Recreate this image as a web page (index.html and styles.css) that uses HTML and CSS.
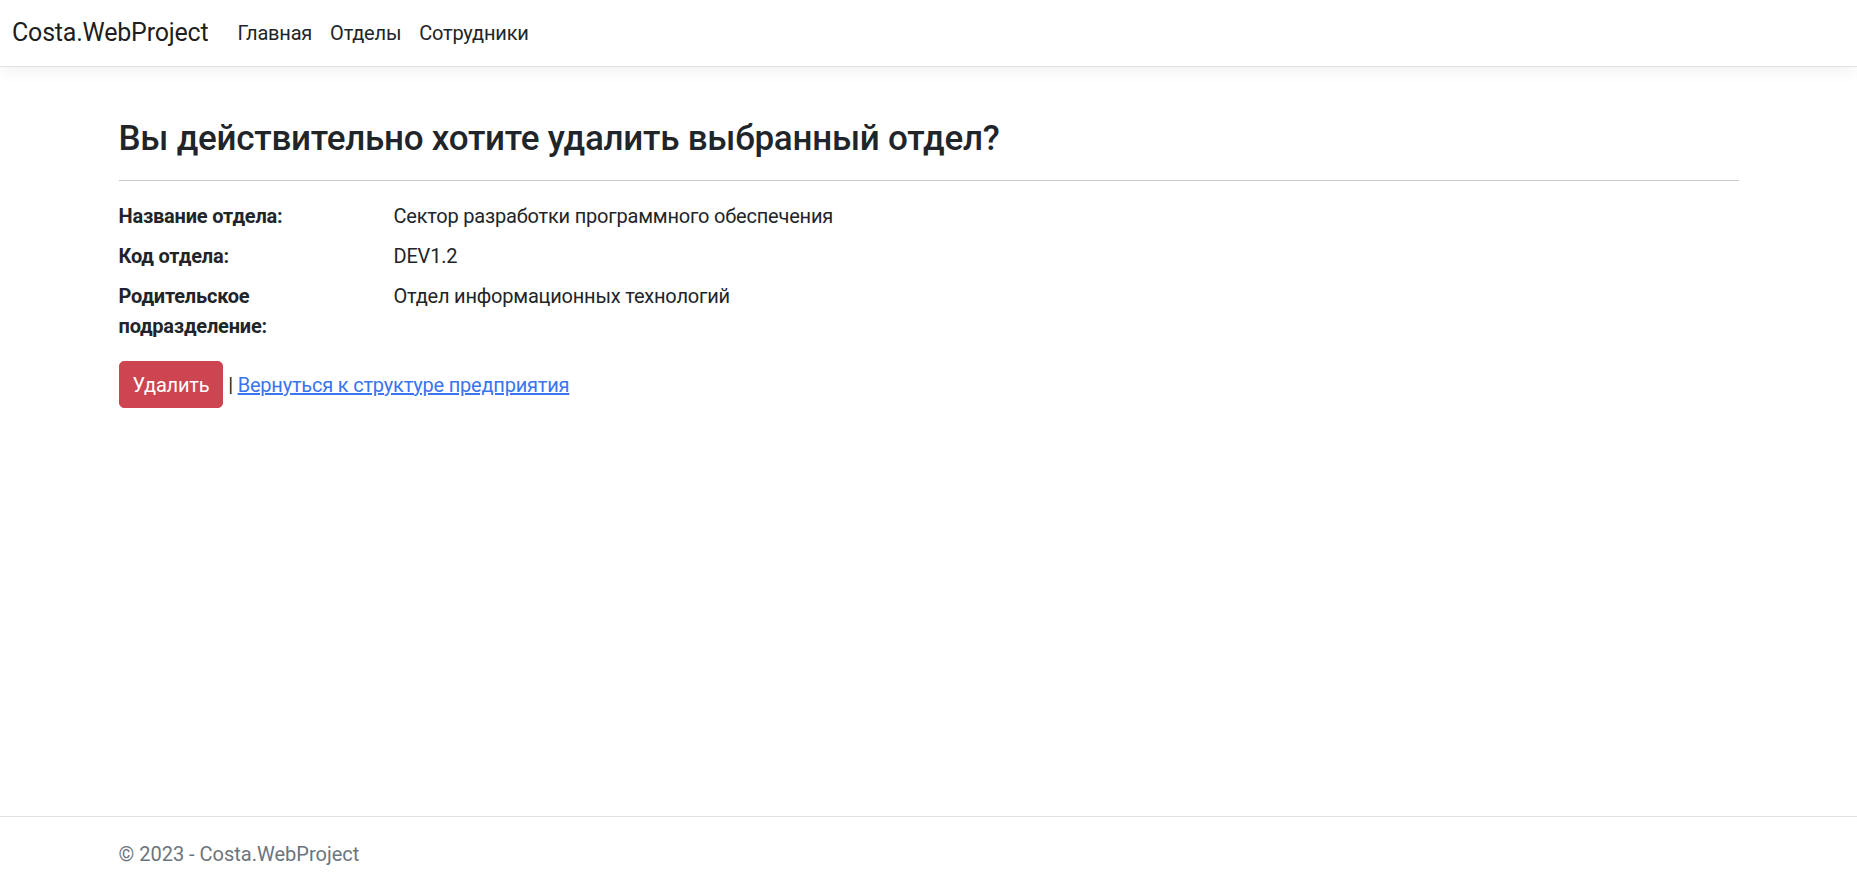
FILE: index.html
```html
<!DOCTYPE html>
<html lang="ru">
<head>
<meta charset="utf-8">
<title>Удаление отдела - Costa.WebProject</title>
<link rel="stylesheet" href="styles.css">
</head>
<body>
<header class="site-header">
  <nav class="navbar">
    <a class="brand" href="#">Costa.WebProject</a>
    <ul class="nav">
      <li><a class="nav-link" href="#">Главная</a></li>
      <li><a class="nav-link" href="#">Отделы</a></li>
      <li><a class="nav-link" href="#">Сотрудники</a></li>
    </ul>
  </nav>
</header>
<div class="page">
  <div class="container">
    <main class="main">
      <h3 class="title">Вы действительно хотите удалить выбранный отдел?</h3>
      <hr class="divider">
      <dl class="details">
        <dt>Название отдела:</dt>
        <dd>Сектор разработки программного обеспечения</dd>
        <dt>Код отдела:</dt>
        <dd>DEV1.2</dd>
        <dt>Родительское подразделение:</dt>
        <dd>Отдел информационных технологий</dd>
      </dl>
      <form class="actions">
        <button type="button" class="btn-danger">Удалить</button> | <a class="back-link" href="#">Вернуться к структуре предприятия</a>
      </form>
    </main>
  </div>
</div>
<footer class="footer">
  <div class="container">© 2023 - Costa.WebProject</div>
</footer>
</body>
</html>
```

FILE: styles.css
```css
html, body {
  margin: 0;
  padding: 0;
}

body {
  font-family: Roboto, "Open Sans", "Liberation Sans", sans-serif;
  font-size: 20px;
  line-height: 1.5;
  letter-spacing: -0.2px;
  color: #212529;
  background: #fff;
  height: 100vh;
  display: flex;
  flex-direction: column;
  overflow: hidden;
}

.site-header {
  flex-shrink: 0;
}

.navbar {
  height: 66px;
  display: flex;
  align-items: center;
  padding: 0 15px 0 12px;
  border-bottom: 1px solid #dee2e6;
  box-shadow: 0 5px 15px rgba(0, 0, 0, 0.05);
  background: #fff;
}

.brand {
  font-size: 25px;
  color: rgba(0, 0, 0, 0.9);
  text-decoration: none;
  margin-right: 20px;
  white-space: nowrap;
}

.nav {
  display: flex;
  list-style: none;
  margin: 0;
  padding: 0;
}

.nav-link {
  display: block;
  padding: 0 9px;
  color: #212529;
  text-decoration: none;
}

.page {
  flex: 1;
}

.container {
  max-width: 1620px;
  margin: 0 auto;
  padding: 0 15px;
}

.main {
  padding-top: 51px;
}

.title {
  font-size: 35px;
  font-weight: 500;
  line-height: 1.2;
  letter-spacing: -0.25px;
  margin: 0 0 10px;
}

.divider {
  margin: 20px 0;
  border: 0;
  border-top: 1px solid #c8c9cb;
  height: 0;
}

.details {
  display: grid;
  grid-template-columns: 275px 1fr;
  margin: 0 -15px 20px;
}

.details dt {
  font-weight: 700;
  padding: 0 15px;
}

.details dd {
  margin: 0 0 10px;
  padding: 0 15px;
}

.actions {
  margin: 0;
}

.btn-danger {
  font-family: inherit;
  font-size: 20px;
  line-height: 1.5;
  letter-spacing: -0.2px;
  padding: 7.5px 13px;
  color: #fff;
  background: #cd4550;
  border: 1px solid #cd4550;
  border-radius: 5px;
  cursor: pointer;
}

.back-link {
  color: #3a74ee;
  text-decoration: underline;
}

.footer {
  flex-shrink: 0;
  height: 70px;
  border-top: 1px solid #dee2e6;
  line-height: 75px;
  letter-spacing: 0;
  color: #6c757d;
  white-space: nowrap;
}
```
